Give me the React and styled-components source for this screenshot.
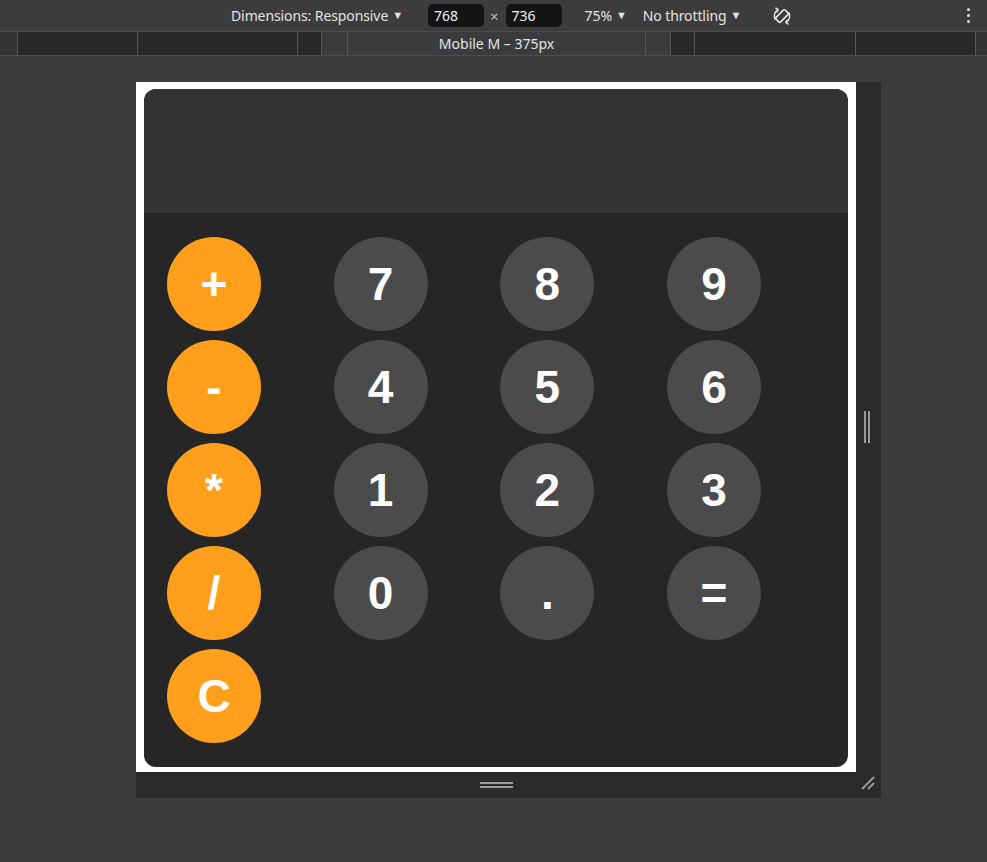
import React from "react";
import styled, { createGlobalStyle } from "styled-components";

const GlobalStyle = createGlobalStyle`
  html, body {
    margin: 0;
    padding: 0;
    background: #3c3c3c;
  }
  body {
    font-family: "Noto Sans", "Open Sans", sans-serif;
  }
`;

const Page = styled.div`
  width: 987px;
  height: 862px;
  background: #3c3c3c;
  display: flex;
  flex-direction: column;
  overflow: hidden;
`;

const Toolbar = styled.div`
  height: 31px;
  display: flex;
  align-items: center;
  padding-left: 231px;
  padding-right: 17px;
  color: #e3e3e3;
  font-size: 14px;
  border-bottom: 1px solid #4d4d4d;
  box-sizing: content-box;
`;

const ToolItem = styled.div`
  display: flex;
  align-items: center;
  gap: 4px;
  margin-left: ${(p) => p.$ml || 0}px;
  white-space: nowrap;
  letter-spacing: -0.1px;
`;

const Caret = styled.span`
  font-size: 11px;
  color: #e3e3e3;
  transform: translateY(-1px);
`;

const SizeInput = styled.div`
  width: 56px;
  height: 23px;
  box-sizing: border-box;
  background: #141414;
  border-radius: 5px;
  padding-left: 6px;
  display: flex;
  align-items: center;
  color: #f0f0f0;
  font-size: 14px;
  margin-left: ${(p) => p.$ml || 0}px;
`;

const Times = styled.span`
  margin-left: 6px;
  margin-right: 7px;
  color: #bdbdbd;
  font-size: 15px;
`;

const Kebab = styled.div`
  margin-left: auto;
  display: flex;
  flex-direction: column;
  gap: 3px;
  span {
    width: 3px;
    height: 3px;
    border-radius: 50%;
    background: #dcdcdc;
  }
`;

const Ruler = styled.div`
  height: 23px;
  display: flex;
  border-bottom: 1px solid #4d4d4d;
`;

const Segment = styled.div`
  width: ${(p) => p.$w}px;
  box-sizing: border-box;
  background: ${(p) => (p.$tone === "light" ? "#3a3b3d" : p.$tone === "edge" ? "#333335" : "#29292b")};
  border-left: ${(p) => (p.$noLine ? "none" : "1px solid #555658")};
  display: flex;
  align-items: center;
  justify-content: center;
  color: #e3e3e3;
  font-size: 14px;
`;

const Stage = styled.div`
  flex: 1;
  padding-top: 26px;
  padding-left: 136px;
`;

const Device = styled.div`
  display: grid;
  grid-template-columns: 720px 25px;
  grid-template-rows: 690px 26px;
`;

const Viewport = styled.div`
  background: #ffffff;
  padding: 7px 8px 0 8px;
  box-sizing: border-box;
`;

const SideGutter = styled.div`
  background: #292a2c;
  display: flex;
  align-items: center;
  justify-content: center;
  gap: 2px;
  padding-right: 4px;
  span {
    width: 2px;
    height: 32px;
    background: #9a9a9a;
  }
`;

const BottomGutter = styled.div`
  background: #292a2c;
  display: flex;
  flex-direction: column;
  align-items: center;
  justify-content: center;
  gap: 2px;
  span {
    width: 33px;
    height: 2px;
    background: #9a9a9a;
  }
`;

const Corner = styled.div`
  background: #292a2c;
  display: flex;
  align-items: center;
  justify-content: center;
  padding: 0 2px 4px 0;
`;

const Calculator = styled.div`
  width: 704px;
  height: 678px;
  border-radius: 12px;
  overflow: hidden;
  background: #262626;
  display: flex;
  flex-direction: column;
`;

const Display = styled.div`
  height: 124px;
  background: #343434;
  color: #ffffff;
  display: flex;
  align-items: flex-end;
  justify-content: flex-end;
  padding: 0 24px 12px;
  font-family: "Liberation Sans", Arial, sans-serif;
  font-size: 48px;
`;

const Keypad = styled.div`
  display: grid;
  grid-template-columns: repeat(4, 166.67px);
  grid-auto-rows: 94px;
  row-gap: 9px;
  padding: 24px 0 24px 23px;
`;

const Key = styled.button`
  width: 94px;
  height: 94px;
  border: none;
  border-radius: 50%;
  padding: 0;
  background: ${(p) => (p.$op ? "#ff9f1c" : "#4b4b4b")};
  color: #ffffff;
  font-family: "Liberation Sans", Arial, sans-serif;
  font-weight: 700;
  font-size: 46px;
  display: flex;
  align-items: center;
  justify-content: center;
  cursor: pointer;
`;

const rows = [
  ["+", "7", "8", "9"],
  ["-", "4", "5", "6"],
  ["*", "1", "2", "3"],
  ["/", "0", ".", "="],
  ["C"],
];

const segments = [
  { w: 17, tone: "edge", noLine: true },
  { w: 120, tone: "dark" },
  { w: 160, tone: "dark" },
  { w: 24, tone: "dark" },
  { w: 26, tone: "light" },
  { w: 298, tone: "light", label: "Mobile M – 375px" },
  { w: 25, tone: "light" },
  { w: 24, tone: "dark" },
  { w: 161, tone: "dark" },
  { w: 120, tone: "dark" },
  { w: 12, tone: "edge" },
];

function RotateIcon() {
  return (
    <svg width="22" height="22" viewBox="0 0 24 24" fill="none" stroke="#e3e3e3" strokeWidth="1.8" strokeLinecap="round">
      <g transform="rotate(45 12 12)">
        <rect x="8.5" y="5" width="7" height="14" rx="1.5" />
      </g>
      <path d="M4.5 15.5a8.5 8.5 0 0 1 3-10.5" />
      <path d="M19.5 8.5a8.5 8.5 0 0 1-3 10.5" />
      <path d="M5.5 3.5l2 1.5-1 2.3" />
      <path d="M18.5 20.5l-2-1.5 1-2.3" />
    </svg>
  );
}

function ResizeCorner() {
  return (
    <svg width="16" height="16" viewBox="0 0 16 16" stroke="#9a9a9a" strokeWidth="2">
      <line x1="2" y1="14" x2="14" y2="2" />
      <line x1="8" y1="14" x2="14" y2="8" />
    </svg>
  );
}

export default function App() {
  return (
    <Page>
      <GlobalStyle />
      <Toolbar>
        <ToolItem>
          Dimensions: Responsive <Caret>▼</Caret>
        </ToolItem>
        <SizeInput $ml={25}>768</SizeInput>
        <Times>×</Times>
        <SizeInput>736</SizeInput>
        <ToolItem $ml={23}>
          75% <Caret>▼</Caret>
        </ToolItem>
        <ToolItem $ml={16}>
          No throttling <Caret>▼</Caret>
        </ToolItem>
        <ToolItem $ml={30}>
          <RotateIcon />
        </ToolItem>
        <Kebab>
          <span />
          <span />
          <span />
        </Kebab>
      </Toolbar>
      <Ruler>
        {segments.map((s, i) => (
          <Segment key={i} $w={s.w} $tone={s.tone} $noLine={s.noLine}>
            {s.label}
          </Segment>
        ))}
      </Ruler>
      <Stage>
        <Device>
          <Viewport>
            <Calculator>
              <Display />
              <Keypad>
                {rows.map((row) =>
                  row.map((k) => (
                    <Key key={k} $op={"+-*/C".includes(k)}>
                      {k}
                    </Key>
                  ))
                )}
              </Keypad>
            </Calculator>
          </Viewport>
          <SideGutter>
            <span />
            <span />
          </SideGutter>
          <BottomGutter>
            <span />
            <span />
          </BottomGutter>
          <Corner>
            <ResizeCorner />
          </Corner>
        </Device>
      </Stage>
    </Page>
  );
}
